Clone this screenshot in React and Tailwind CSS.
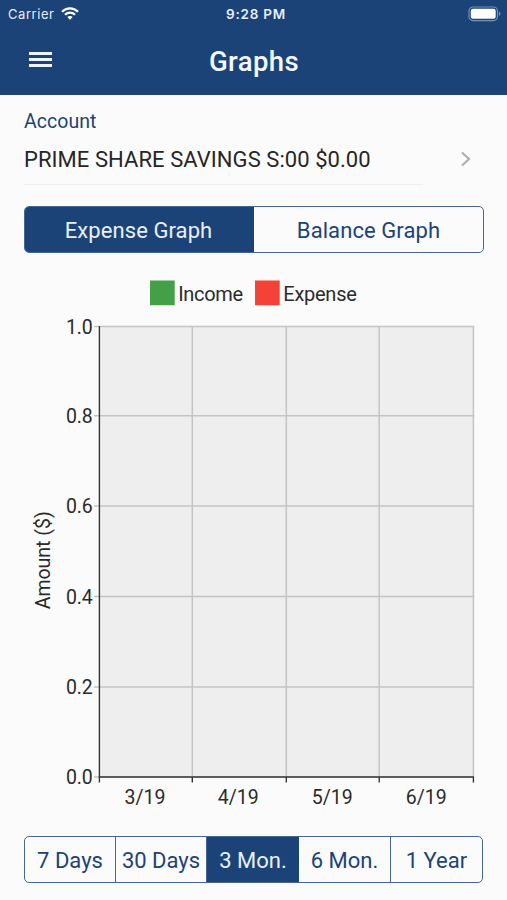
const yTicks = [
  { label: '1.0', y: 46.5 },
  { label: '0.8', y: 135.8 },
  { label: '0.6', y: 226.1 },
  { label: '0.4', y: 316.5 },
  { label: '0.2', y: 407 },
  { label: '0.0', y: 497 },
];

const columns = [
  { label: '3/19', x: 145 },
  { label: '4/19', x: 238.3 },
  { label: '5/19', x: 332.3 },
  { label: '6/19', x: 426.3 },
];

const gridX = [192.3, 286.3, 379.2, 473.4];
const baseline = 497;

function StatusBar() {
  return (
    <div className="relative flex h-[27px] items-center justify-between pl-[8px] pr-[6px] font-['Inter',sans-serif] text-[13px] text-[#e6eefa]">
      <div className="flex items-center gap-[7px]">
        <span className="pt-px leading-[26px] tracking-[0.55px]">Carrier</span>
        <svg width="18" height="13" viewBox="0 0 18 13" fill="none" stroke="white" strokeWidth="2.3">
          <path d="M1 4.8 C5.5 .2 12.5 .2 17 4.8" />
          <path d="M4 7.8 C6.8 5 11.2 5 14 7.8" />
          <path d="M6.3 9.9 C7.8 8.6 10.2 8.6 11.7 9.9 L9 12.7 Z" fill="white" stroke="none" />
        </svg>
      </div>
      <span className="absolute inset-x-0 top-px pl-[5px] text-center text-[13.5px] leading-[27px] font-semibold tracking-[0.75px]">9:28 PM</span>
      <svg width="33" height="16" viewBox="0 0 33 16">
        <rect x="1" y="1" width="28.5" height="13.6" rx="4" fill="none" stroke="#7792b8" strokeWidth="1.2" />
        <rect x="2.8" y="2.8" width="24.9" height="10" rx="2.2" fill="white" />
        <path d="M31 5.6 a2.4 2.4 0 0 1 0 4.4 Z" fill="#7792b8" />
      </svg>
    </div>
  );
}

function Header() {
  return (
    <header className="h-[95px] bg-[#1b4378]">
      <StatusBar />
      <div className="grid h-[68px] grid-cols-[1fr_auto_1fr] items-center">
        <div className="flex flex-col gap-[3px] pb-[3px] pl-[29px]">
          <span className="h-[3px] w-[23px] bg-[#eef4fd]" />
          <span className="h-[3px] w-[23px] bg-[#eef4fd]" />
          <span className="h-[3px] w-[23px] bg-[#eef4fd]" />
        </div>
        <h1 className="pt-[2px] pl-px text-[27.5px] leading-[66px] font-medium tracking-[0.4px] text-[#f4f8ff]">Graphs</h1>
      </div>
    </header>
  );
}

function Chart() {
  return (
    <svg className="block" width="507" height="556" viewBox="0 0 507 556">
      <g fontSize="20" fill="#2b2b2b">
        <rect x="150" y="0.5" width="24.7" height="24.7" fill="#43a047" />
        <text x="178.2" y="20.7" textLength="65">Income</text>
        <rect x="255" y="0.5" width="24.7" height="24.7" fill="#f44336" />
        <text x="283.3" y="20.7" textLength="73.5">Expense</text>
      </g>
      <rect x="99.5" y="46.5" width="374" height="450.5" fill="#eeeeee" />
      <g stroke="#c4c4c4" strokeWidth="1.5">
        {yTicks.map((t) => (
          <line key={t.label} x1="94" x2="474.2" y1={t.y} y2={t.y} />
        ))}
        {gridX.map((x) => (
          <line key={x} x1={x} x2={x} y1="46.5" y2={baseline} />
        ))}
      </g>
      <g stroke="#363636" strokeWidth="1.4">
        <line x1="99.4" x2="99.4" y1="46" y2="502.5" />
        <line x1="98.8" x2="474" y1={baseline} y2={baseline} />
        {gridX.map((x) => (
          <line key={x} x1={x} x2={x} y1={baseline} y2="502.5" />
        ))}
      </g>
      <g fontSize="19.5" fill="#2b2b2b">
        {yTicks.map((t) => (
          <text key={t.label} x="66" y={t.y + 7} textLength="26.8">{t.label}</text>
        ))}
        {columns.map((c) => (
          <text key={c.label} x={c.x} y="523.5" textAnchor="middle" textLength="41">{c.label}</text>
        ))}
        <text transform="translate(49.8 329.3) rotate(-90)" textLength="98">Amount ($)</text>
      </g>
    </svg>
  );
}

const ranges = ['7 Days', '30 Days', '3 Mon.', '6 Mon.', '1 Year'];

export default function App() {
  return (
    <div className="h-[900px] w-[507px] overflow-hidden bg-[#fbfbfb] font-['Roboto',sans-serif] text-[#262626]">
      <Header />
      <section className="h-[111px] px-6 pt-[14px]">
        <div className="h-[25px] text-[19.5px] leading-[26px] tracking-[0.05px] text-[#1b4378]">Account</div>
        <div className="flex h-[51px] w-[448px] items-start justify-between">
          <div className="h-[51px] w-[399px] border-b border-[#efefef] pt-[12px] text-[22px] leading-[28px] tracking-[0.06px] whitespace-nowrap">
            PRIME SHARE SAVINGS S:00 $0.00
          </div>
          <svg className="mt-[17px]" width="12" height="16" viewBox="0 0 12 16" fill="none" stroke="#b0b0b0" strokeWidth="2.3">
            <path d="M2 1.5 L9 8 L2 14.5" />
          </svg>
        </div>
      </section>
      <div className="mx-6 flex h-[47px] w-[460px] overflow-hidden rounded-[5px] border-[1.5px] border-[#456796] text-[22px] leading-[48px] tracking-[0.08px]">
        <div className="w-[229px] bg-[#1b4378] pr-[2px] text-center text-[#e8f0fc]">Expense Graph</div>
        <div className="flex-1 text-center text-[#1b4378]">Balance Graph</div>
      </div>
      <div className="pt-[27px]">
        <Chart />
      </div>
      <div className="mx-6 grid h-[47px] w-[459px] grid-cols-[91px_91px_92px_92px_1fr] overflow-hidden rounded-[5px] border border-[#456796] text-[22px] leading-[48px] text-[#1b4378]">
        {ranges.map((r) => (
          <div
            key={r}
            className={
              r === '3 Mon.'
                ? 'bg-[#1b4378] text-center text-[#e8f0fc]'
                : 'border-r border-[#456796] text-center whitespace-nowrap last:border-r-0'
            }
          >
            {r}
          </div>
        ))}
      </div>
    </div>
  );
}
